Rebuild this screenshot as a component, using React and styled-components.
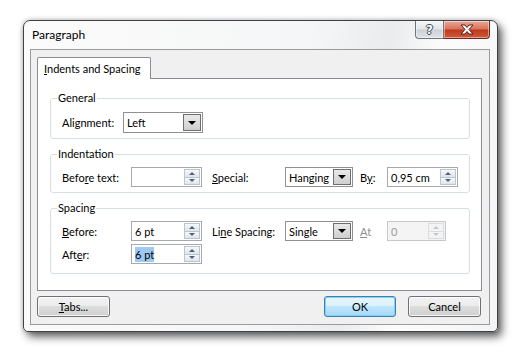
import React from 'react';
import styled, { createGlobalStyle } from 'styled-components';

const GlobalStyle = createGlobalStyle`
  html, body {
    margin: 0;
    padding: 0;
    background: #ffffff;
  }
  body {
    font-family: Lato, "Noto Sans", sans-serif;
    font-size: 11px;
    color: #000000;
  }
`;

const Stage = styled.div`
  padding: 20px 0 0 23px;
  width: 521px;
  height: 358px;
  box-sizing: border-box;
`;

const Window = styled.div`
  width: 475px;
  height: 312px;
  box-sizing: border-box;
  display: flex;
  flex-direction: column;
  border: 1px solid #3f4246;
  border-radius: 7px 7px 5px 5px;
  background: linear-gradient(100deg, #fbfbfb 0%, #f5f6f7 55%, #e9ebed 70%, #fcfcfc 80%, #f3f4f5 100%);
  box-shadow: 4px 5px 9px rgba(0, 0, 0, 0.6), 0 0 5px rgba(0, 0, 0, 0.25);
`;

const TitleBar = styled.div`
  height: 28px;
  display: flex;
  align-items: flex-start;
  padding-left: 8px;
`;

const Caption = styled.div`
  margin-top: 6px;
  line-height: 16px;
  font-size: 12px;
`;

const CaptionButtons = styled.div`
  margin-left: auto;
  margin-right: 7px;
  display: flex;
`;

const CaptionButton = styled.div`
  width: ${({ $w }) => $w}px;
  height: 18px;
  box-sizing: border-box;
  display: flex;
  align-items: center;
  justify-content: center;
  border: 1px solid ${({ $close }) => ($close ? '#6d2a1c' : '#6f747b')};
  border-top: none;
  border-left: ${({ $close }) => ($close ? 'none' : undefined)};
  border-radius: ${({ $close }) => ($close ? '0 0 4px 0' : '0 0 0 4px')};
  background: ${({ $close }) => ($close
    ? 'linear-gradient(#e9a897 0%, #d9745d 45%, #c0391d 55%, #cf5a3c 100%)'
    : 'linear-gradient(#f5f6f7 0%, #e3e6e9 45%, #cdd2d8 55%, #dfe3e7 100%)')};
  box-shadow: inset 0 0 0 1px rgba(255, 255, 255, 0.45);
`;

const HelpGlyph = styled.span`
  font-family: "DejaVu Sans", sans-serif;
  font-weight: bold;
  font-size: 12px;
  line-height: 12px;
  color: #ffffff;
  text-shadow: -1px 0 #3c4654, 1px 0 #3c4654, 0 -1px #3c4654, 0 1px #3c4654;
`;

const Client = styled.div`
  flex: 1;
  margin: 0 7px 6px 6px;
  border: 1px solid #9b9b9b;
  background: #f0f0f0;
  display: flex;
  flex-direction: column;
  padding: 7px 7px 7px 6px;
`;

const TabStrip = styled.div`
  display: flex;
  position: relative;
  z-index: 1;
  margin-bottom: -1px;
`;

const Tab = styled.div`
  height: 22px;
  box-sizing: border-box;
  padding: 3px 9px 0 6px;
  border: 1px solid #898c95;
  border-bottom: none;
  border-radius: 2px 2px 0 0;
  background: #ffffff;
  line-height: 16px;
`;

const Panel = styled.div`
  flex: 1;
  border: 1px solid #898c95;
  background: #ffffff;
  padding: 11px 11px 0 12px;
  display: flex;
  flex-direction: column;
  gap: 7px;
`;

const Group = styled.fieldset`
  margin: 0;
  min-width: 0;
  padding: ${({ $pt = 5 }) => $pt}px 10px ${({ $pb = 5 }) => $pb}px 11px;
  border: 1px solid #d5dfe5;
  border-radius: 3px;
  display: flex;
  flex-direction: column;
  gap: 3px;
`;

const Legend = styled.legend`
  padding: 0 1px;
  margin-left: -5px;
  line-height: 16px;
`;

const Row = styled.div`
  display: flex;
  align-items: center;
`;

const Label = styled.span`
  width: ${({ $w }) => $w}px;
  margin-left: ${({ $ml = 0 }) => $ml}px;
  flex-shrink: 0;
  color: ${({ $disabled }) => ($disabled ? '#8d8d8d' : '#000000')};
  white-space: nowrap;
`;

const Combo = styled.div`
  width: ${({ $w }) => $w}px;
  height: ${({ $h = 20 }) => $h}px;
  box-sizing: border-box;
  border: 1px solid #8f9092;
  background: #ffffff;
  display: flex;
  align-items: stretch;
  flex-shrink: 0;
`;

const ComboValue = styled.span`
  flex: 1;
  padding-left: 3px;
  display: flex;
  align-items: center;
`;

const ComboButton = styled.div`
  width: 18px;
  margin: 1px;
  box-sizing: border-box;
  border: 1px solid #6e6e6e;
  background: linear-gradient(#e9e9e9, #cfcfcf);
  display: flex;
  align-items: center;
  justify-content: center;
`;

const Arrow = styled.span`
  width: 0;
  height: 0;
  border-left: 4px solid transparent;
  border-right: 4px solid transparent;
  border-top: 4px solid #000000;
`;

const Spin = styled.div`
  width: ${({ $w }) => $w}px;
  height: 20px;
  box-sizing: border-box;
  border: 1px solid ${({ $disabled }) => ($disabled ? '#c6c8cb' : '#a5a9b0')};
  background: ${({ $disabled }) => ($disabled ? '#f4f4f4' : '#ffffff')};
  color: ${({ $disabled }) => ($disabled ? '#9a9a9a' : '#000000')};
  display: flex;
  flex-shrink: 0;
`;

const SpinValue = styled.span`
  flex: 1;
  padding-left: 3px;
  display: flex;
  align-items: center;
`;

const Selected = styled.span`
  background: #9ec9f1;
  line-height: 15px;
`;

const SpinButtons = styled.div`
  width: 16px;
  margin: 1px 1px 1px 0;
  display: flex;
  flex-direction: column;
`;

const SpinHalf = styled.div`
  flex: 1;
  box-sizing: border-box;
  border: 1px solid ${({ $disabled }) => ($disabled ? '#dadde0' : '#bcc4cd')};
  border-top-width: ${({ $down }) => ($down ? 0 : 1)}px;
  background: ${({ $disabled }) => ($disabled ? '#f4f4f4' : 'linear-gradient(#f6f8fa, #dfe5ec)')};
  display: flex;
  align-items: center;
  justify-content: center;
`;

const SpinArrow = styled.span`
  width: 0;
  height: 0;
  border-left: 3px solid transparent;
  border-right: 3px solid transparent;
  ${({ $down, $disabled }) => {
    const c = $disabled ? '#c3c6ca' : '#4d5f7a';
    return $down ? `border-top: 3px solid ${c};` : `border-bottom: 3px solid ${c};`;
  }}
`;

const ButtonRow = styled.div`
  display: flex;
  margin-top: 5px;
`;

const Button = styled.button`
  width: ${({ $w }) => $w}px;
  height: 21px;
  margin-left: ${({ $ml = 0 }) => $ml}px;
  padding: 0;
  font: inherit;
  color: #000000;
  border: 1px solid ${({ $default }) => ($default ? '#3c7fb1' : '#707070')};
  border-radius: 3px;
  background: ${({ $default }) => ($default
    ? 'linear-gradient(#eaf6fd 0%, #d9f0fc 50%, #bee6fd 50%, #a7d9f5 100%)'
    : 'linear-gradient(#f2f2f2 0%, #ebebeb 50%, #dddddd 50%, #cfcfcf 100%)')};
  box-shadow: inset 0 0 0 1px ${({ $default }) => ($default ? '#7ed3f7' : 'rgba(255,255,255,0.8)')};
`;

function CloseGlyph() {
  return (
    <svg width="14" height="11" viewBox="0 0 14 11">
      <path
        d="M1 1h4l2 2.5L9 1h4l-4 4.5 4 4.5H9L7 7.5 5 10H1l4-4.5z"
        fill="#ffffff"
        stroke="#5a2114"
        strokeWidth="1"
        strokeLinejoin="round"
      />
    </svg>
  );
}

function DropDown({ value, width, height }) {
  return (
    <Combo $w={width} $h={height}>
      <ComboValue>{value}</ComboValue>
      <ComboButton><Arrow /></ComboButton>
    </Combo>
  );
}

function SpinBox({ value, width, disabled }) {
  return (
    <Spin $w={width} $disabled={disabled}>
      <SpinValue>{value}</SpinValue>
      <SpinButtons>
        <SpinHalf $disabled={disabled}><SpinArrow $disabled={disabled} /></SpinHalf>
        <SpinHalf $down $disabled={disabled}><SpinArrow $down $disabled={disabled} /></SpinHalf>
      </SpinButtons>
    </Spin>
  );
}

export default function App() {
  return (
    <Stage>
      <GlobalStyle />
      <Window>
        <TitleBar>
          <Caption>Paragraph</Caption>
          <CaptionButtons>
            <CaptionButton $w={29}><HelpGlyph>?</HelpGlyph></CaptionButton>
            <CaptionButton $w={46} $close><CloseGlyph /></CaptionButton>
          </CaptionButtons>
        </TitleBar>
        <Client>
          <TabStrip>
            <Tab><u>I</u>ndents and Spacing</Tab>
          </TabStrip>
          <Panel>
            <Group $pt={6}>
              <Legend>General</Legend>
              <Row>
                <Label $w={61}>Alignment:</Label>
                <DropDown value="Left" width={80} height={21} />
              </Row>
            </Group>
            <Group>
              <Legend>Indentation</Legend>
              <Row>
                <Label $w={69}>Befo<u>r</u>e text:</Label>
                <SpinBox value="" width={71} />
                <Label $w={73} $ml={10}><u>S</u>pecial:</Label>
                <DropDown value="Hanging" width={68} />
                <Label $w={27} $ml={7}>B<u>y</u>:</Label>
                <SpinBox value="0,95 cm" width={71} />
              </Row>
            </Group>
            <Group $pb={9}>
              <Legend>Spacing</Legend>
              <Row>
                <Label $w={69}><u>B</u>efore:</Label>
                <SpinBox value="6 pt" width={71} />
                <Label $w={73} $ml={10}>Li<u>n</u>e Spacing:</Label>
                <DropDown value="Single" width={68} />
                <Label $w={27} $ml={7} $disabled><u>A</u>t</Label>
                <SpinBox value="0" width={59} disabled />
              </Row>
              <Row>
                <Label $w={69}>Aft<u>e</u>r:</Label>
                <SpinBox value={<Selected>6 pt</Selected>} width={71} />
              </Row>
            </Group>
          </Panel>
          <ButtonRow>
            <Button $w={73}><u>T</u>abs...</Button>
            <Button $w={72} $ml={214} $default>OK</Button>
            <Button $w={73} $ml={12}>Cancel</Button>
          </ButtonRow>
        </Client>
      </Window>
    </Stage>
  );
}
